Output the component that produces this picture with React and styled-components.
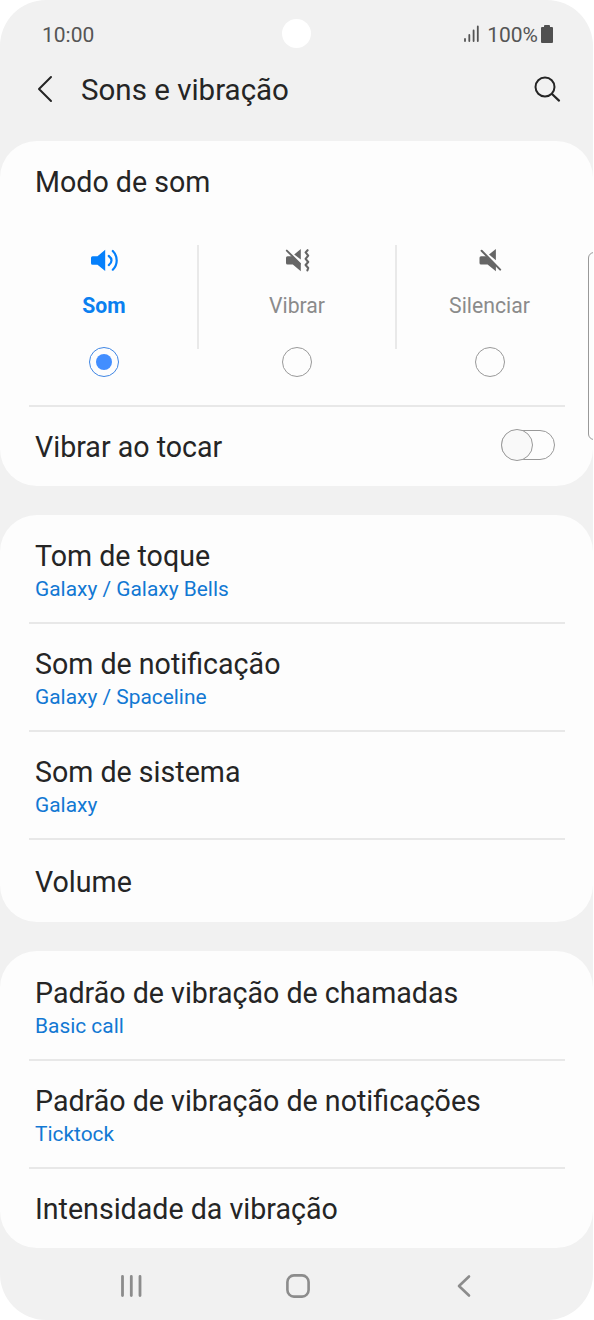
import { useState } from "react";
import styled, { createGlobalStyle } from "styled-components";

const GlobalStyle = createGlobalStyle`
	*,
	*::after {
		box-sizing: border-box;
	}

	body {
		margin: 0;
		background: #fff;
		font-family: Roboto, sans-serif;
		color: #252525;
	}
`;

const Phone = styled.div`
	position: relative;
	display: flex;
	flex-direction: column;
	width: 593px;
	height: 1320px;
	border-radius: 46px;
	background: #f1f1f1;
	overflow: hidden;
`;

const StatusBar = styled.div`
	display: grid;
	grid-template-columns: 1fr 30px 1fr;
	align-items: center;
	flex: none;
	height: 68px;
	padding: 0 40px 0 42px;
	font-size: 21px;
	color: #555;
`;

const Time = styled.div`
	padding-top: 1px;
`;

const Camera = styled.div`
	width: 29px;
	height: 29px;
	margin: -1px 0 0 -1px;
	border-radius: 50%;
	background: #fff;
`;

const StatusRight = styled.div`
	display: flex;
	justify-content: flex-end;
	align-items: center;

	span {
		margin: 0 3px 0 7px;
		padding-top: 1px;
	}
`;

const Header = styled.header`
	display: flex;
	align-items: center;
	flex: none;
	height: 44px;
	margin-bottom: 29px;
	padding: 0 32px 0 36px;

	svg {
		margin-bottom: 2px;
	}

	h1 {
		flex: 1;
		margin: 0 0 0 27px;
		font-size: 29.5px;
		font-weight: 400;
	}
`;

const Card = styled.section`
	flex: none;
	height: ${(props) => props.$height}px;
	margin-bottom: ${(props) => (props.$last ? 0 : 29)}px;
	border-radius: 37px;
	background: #fdfdfd;
`;

const CardTitle = styled.h2`
	margin: 0;
	padding: 24px 35px 0;
	height: 104px;
	font-size: 28.6px;
	line-height: 34px;
	font-weight: 400;
`;

const Modes = styled.div`
	display: grid;
	grid-template-columns: 186px 2px 196px 2px 185px;
	height: 160px;
	padding-left: 11px;
`;

const ModeDivider = styled.div`
	height: 104px;
	background: #e9e9e9;
`;

const Mode = styled.div`
	display: flex;
	flex-direction: column;
	align-items: center;
	cursor: pointer;

	svg {
		margin-top: 2px;
	}

	span {
		margin: 20px 0 28px;
		font-size: 21.2px;
		line-height: 26px;
		font-weight: ${(props) => (props.$active ? 700 : 400)};
		color: ${(props) => (props.$active ? "#0a80f0" : "#8b8b8b")};
	}
`;

const Radio = styled.div`
	display: flex;
	justify-content: center;
	align-items: center;
	width: 30px;
	height: 30px;
	border: 1.5px solid ${(props) => (props.$active ? "#3f86e4" : "#999")};
	border-radius: 50%;

	&::after {
		content: "";
		width: 16px;
		height: 16px;
		border-radius: 50%;
		background: ${(props) => (props.$active ? "#428eff" : "transparent")};
	}
`;

const Line = styled.div`
	height: 2px;
	margin: 0 28px 0 29px;
	background: #e8e8e8;
`;

const Row = styled.div`
	display: flex;
	flex-direction: column;
	justify-content: center;
	height: ${(props) => props.$height || 106}px;
	padding: ${(props) => props.$top ?? 3}px 35px 0;
`;

const RowTitle = styled.div`
	font-size: 28.6px;
	line-height: 34px;
`;

const RowValue = styled.div`
	margin-top: 3px;
	font-size: 20.9px;
	line-height: 26px;
	color: #1278d3;
`;

const SwitchRow = styled.div`
	display: flex;
	justify-content: space-between;
	align-items: center;
	height: 79px;
	padding: 1px 38px 0 35px;
`;

const Switch = styled.div`
	display: flex;
	align-items: center;
	width: 54px;
	height: 30px;
	margin-bottom: 4px;
	border: 1.5px solid #999;
	border-radius: 15px;

	&::after {
		content: "";
		flex: none;
		width: 32px;
		height: 32px;
		margin-left: -1px;
		border: 1.5px solid #999;
		border-radius: 50%;
		background: #f9f9f9;
	}
`;

const EdgeHandle = styled.div`
	position: absolute;
	top: 252px;
	right: -8px;
	width: 13px;
	height: 188px;
	border: 1px solid #999;
	border-radius: 6px;
	background: #fdfdfd;
`;

const NavBar = styled.nav`
	display: flex;
	justify-content: space-between;
	align-items: center;
	height: 72px;
	padding: 4px 115px 0 117px;
`;

const NavButton = styled.div`
	display: flex;
	justify-content: center;
	width: 28px;
`;

const SoundIcon = () => (
	<svg width="30" height="26" viewBox="0 0 30 26" fill="none">
		<path d="M3.5 9.3H8.5L16.2 2.7V24L8.5 17.7H3.5Q2 17.7 2 16.2V10.8Q2 9.3 3.5 9.3Z" fill="#0580fb" />
		<path
			d="M19.8 9Q22.5 11 22.5 13.5T19.8 18.1M23.8 4Q27.7 8 27.7 13.4T23.8 22.7"
			stroke="#0580fb"
			strokeWidth="2.2"
			strokeLinecap="round"
		/>
	</svg>
);

const VibrateIcon = () => (
	<svg width="30" height="26" viewBox="0 0 30 26" fill="none">
		<path d="M18.8 2V12.6L12.2 7.4Z" fill="#666" />
		<path d="M5.5 9.3H10L18.8 17V24.3L10.8 17.6H5.5Q4 17.6 4 16.1V10.8Q4 9.3 5.5 9.3Z" fill="#666" />
		<path d="M4.8 3.6L18 16.6" stroke="#666" strokeWidth="1.9" strokeLinecap="round" />
		<path
			d="M25.6 3.2L23.6 5.4L26.2 8.6L23.6 11.8L26.2 15L23.6 18L26.2 21L25.4 23.4"
			stroke="#666"
			strokeWidth="2.1"
			strokeLinecap="round"
			strokeLinejoin="round"
		/>
	</svg>
);

const MuteIcon = () => (
	<svg width="30" height="26" viewBox="0 0 30 26" fill="none">
		<path d="M20.9 2V13.2L14 7.6Z" fill="#666" />
		<path d="M6 9.3H11L20.9 18.5V24.3L12.6 17.6H6Q4.5 17.6 4.5 16.1V10.8Q4.5 9.3 6 9.3Z" fill="#666" />
		<path d="M6.6 3.8L25.2 22.6" stroke="#666" strokeWidth="2" strokeLinecap="round" />
	</svg>
);

const modes = [
	{ name: "Som", icon: <SoundIcon /> },
	{ name: "Vibrar", icon: <VibrateIcon /> },
	{ name: "Silenciar", icon: <MuteIcon /> },
];

const Setting = ({ title, value, height, top }) => (
	<Row $height={height} $top={top}>
		<RowTitle>{title}</RowTitle>
		{value && <RowValue>{value}</RowValue>}
	</Row>
);

const App = () => {
	const [mode, setMode] = useState("Som");

	const renderMode = ({ name, icon }) => (
		<Mode key={name} $active={mode === name} onClick={() => setMode(name)}>
			{icon}
			<span>{name}</span>
			<Radio $active={mode === name} />
		</Mode>
	);

	return (
		<Phone>
			<GlobalStyle />
			<StatusBar>
				<Time>10:00</Time>
				<Camera />
				<StatusRight>
					<svg width="17" height="18" viewBox="0 0 17 18" fill="none">
						<path
							d="M2 14V16M6.3 10V16M10.6 5.5V16M14.8 1.5V16"
							stroke="#555"
							strokeWidth="1.8"
							strokeLinecap="round"
						/>
					</svg>
					<span>100%</span>
					<svg width="12" height="20" viewBox="0 0 12 20">
						<path d="M4 1H8Q9 1 9 2V3H11Q12 3 12 4V18Q12 19 11 19H1Q0 19 0 18V4Q0 3 1 3H3V2Q3 1 4 1Z" fill="#505050" />
					</svg>
				</StatusRight>
			</StatusBar>
			<Header>
				<svg width="18" height="30" viewBox="0 0 18 30" fill="none">
					<path
						d="M15 3L3 15L15 27"
						stroke="#252525"
						strokeWidth="2"
						strokeLinecap="round"
						strokeLinejoin="round"
					/>
				</svg>
				<h1>Sons e vibração</h1>
				<svg width="28" height="28" viewBox="0 0 28 28" fill="none">
					<circle cx="12" cy="12" r="9.5" stroke="#252525" strokeWidth="2" />
					<path d="M19 19L26 25.6" stroke="#252525" strokeWidth="2.2" strokeLinecap="round" />
				</svg>
			</Header>

			<Card $height={345}>
				<CardTitle>Modo de som</CardTitle>
				<Modes>
					{renderMode(modes[0])}
					<ModeDivider />
					{renderMode(modes[1])}
					<ModeDivider />
					{renderMode(modes[2])}
				</Modes>
				<Line />
				<SwitchRow>
					<RowTitle>Vibrar ao tocar</RowTitle>
					<Switch />
				</SwitchRow>
			</Card>

			<Card $height={407}>
				<Setting title="Tom de toque" value="Galaxy / Galaxy Bells" height={107} top={4} />
				<Line />
				<Setting title="Som de notificação" value="Galaxy / Spaceline" />
				<Line />
				<Setting title="Som de sistema" value="Galaxy" />
				<Line />
				<Setting title="Volume" height={82} top={2} />
			</Card>

			<Card $height={297} $last>
				<Setting title="Padrão de vibração de chamadas" value="Basic call" height={108} top={4} />
				<Line />
				<Setting title="Padrão de vibração de notificações" value="Ticktock" />
				<Line />
				<Setting title="Intensidade da vibração" height={79} top={0} />
			</Card>

			<NavBar>
				<NavButton>
					<svg width="22" height="24" viewBox="0 0 22 24">
						<path d="M2.5 2.5V21.5M11.3 2.5V21.5M20 2.5V21.5" stroke="#8c8c8c" strokeWidth="2.8" strokeLinecap="round" />
					</svg>
				</NavButton>
				<NavButton>
					<svg width="24" height="24" viewBox="0 0 24 24" fill="none">
						<rect x="1.4" y="1.4" width="21.2" height="21.2" rx="6.5" stroke="#8c8c8c" strokeWidth="2.6" />
					</svg>
				</NavButton>
				<NavButton>
					<svg width="16" height="24" viewBox="0 0 16 24" fill="none">
						<path
							d="M13 2.5L3 12L13 21.5"
							stroke="#8c8c8c"
							strokeWidth="2.6"
							strokeLinecap="round"
							strokeLinejoin="round"
						/>
					</svg>
				</NavButton>
			</NavBar>
			<EdgeHandle />
		</Phone>
	);
};

export default App;
